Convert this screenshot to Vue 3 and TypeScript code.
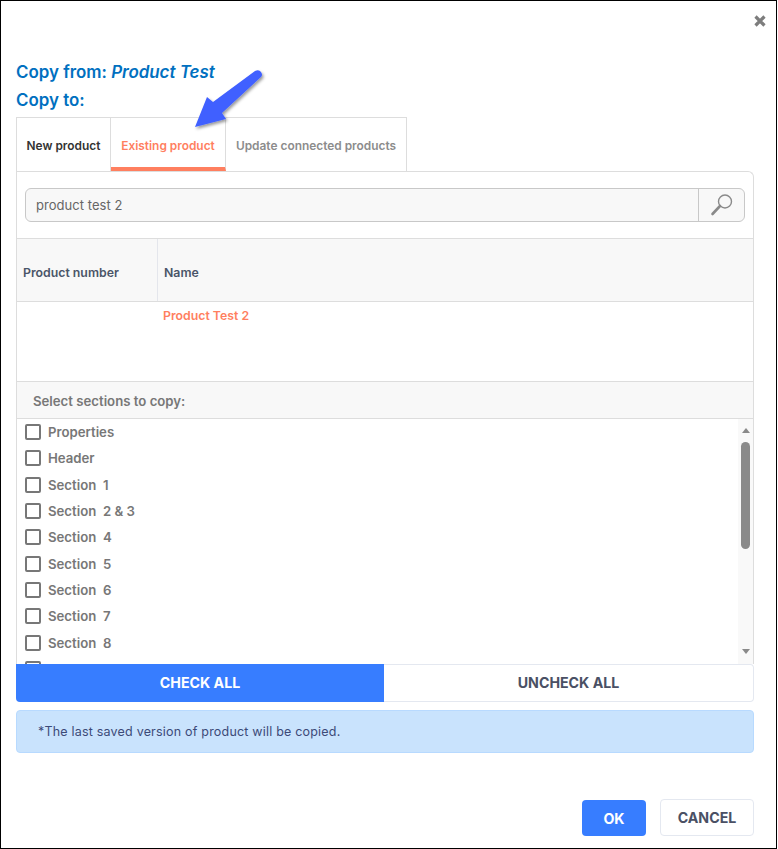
<script setup lang="ts">
const sections = [
  'Properties',
  'Header',
  'Section  1',
  'Section  2 & 3',
  'Section  4',
  'Section  5',
  'Section  6',
  'Section  7',
  'Section  8',
]
</script>

<template>
  <div class="dialog">
    <!-- close -->
    <div class="close-row">
      <svg class="close" width="14" height="14" viewBox="0 0 14 14">
        <path d="M2.5 2.5 L11.5 11.5 M11.5 2.5 L2.5 11.5" stroke="#7d7d7d" stroke-width="3.2" fill="none" />
      </svg>
    </div>

    <div class="title">Copy from: <em>Product Test</em></div>
    <div class="title title-to">Copy to:</div>

    <!-- tabs -->
    <div class="tabs">
      <div class="tab tab-new">New product</div>
      <div class="tab tab-active">Existing product</div>
      <div class="tab tab-muted">Update connected products</div>
    </div>

    <div class="panel">
      <div class="search-wrap">
        <div class="search">
          <div class="search-input">product test 2</div>
          <div class="search-btn">
            <svg width="24" height="24" viewBox="0 0 24 24" fill="none">
              <circle cx="15" cy="8.5" r="6.5" stroke="#8a8a8a" stroke-width="1.4" />
              <path d="M10 13 L2.5 21" stroke="#8a8a8a" stroke-width="2.6" stroke-linecap="round" />
            </svg>
          </div>
        </div>
      </div>

      <div class="thead">
        <div class="th th-num">Product number</div>
        <div class="th th-name">Name</div>
      </div>
      <div class="tbody">
        <div class="result">Product Test 2</div>
      </div>

      <div class="select-head">Select sections to copy:</div>
      <div class="list-wrap">
        <div class="list">
          <div v-for="s in sections" :key="s" class="item">
            <span class="check"></span>
            <span class="item-label">{{ s }}</span>
          </div>
          <!-- next row is scrolled out, only the box top peeks in -->
          <div class="item">
            <span class="check"></span>
          </div>
        </div>
        <div class="scrollbar">
          <span class="arrow-up"></span>
          <span class="thumb"></span>
          <span class="arrow-down"></span>
        </div>
      </div>
    </div>

    <div class="check-buttons">
      <div class="btn-check">CHECK ALL</div>
      <div class="btn-uncheck">UNCHECK ALL</div>
    </div>

    <div class="alert">*The last saved version of product will be copied.</div>

    <div class="footer">
      <div class="btn-ok">OK</div>
      <div class="btn-cancel">CANCEL</div>
    </div>

    <!-- annotation arrow laid over the screenshot -->
    <svg class="annotation" width="90" height="76" viewBox="0 0 90 76">
      <defs>
        <filter id="arrow-shadow" x="-20%" y="-20%" width="150%" height="150%">
          <feDropShadow dx="1.5" dy="2" stdDeviation="1.6" flood-color="#000" flood-opacity="0.4" />
        </filter>
      </defs>
      <path
        d="M76 3 Q80 1 82 4 Q84 7 82 9 L43 45 L47 51 L16 59 L28 29 L34 34 Z"
        fill="#4060ff"
        filter="url(#arrow-shadow)"
      />
    </svg>
  </div>
</template>

<style scoped>
.dialog {
  position: relative;
  box-sizing: border-box;
  width: 777px;
  height: 849px;
  padding: 0 22px 0 15px;
  background: #fff;
  border: 1px solid #000;
  font-family: Inter, "Liberation Sans", sans-serif;
  display: flex;
  flex-direction: column;
}
.close-row {
  height: 61px;
  display: flex;
  justify-content: flex-end;
  margin-right: -13px;
  padding-top: 13px;
  box-sizing: border-box;
}
.title {
  font-size: 16.9px;
  line-height: 20px;
  font-weight: 600;
  color: #0070c0;
}
.title em { font-style: italic; }
.title-to { margin-top: 8px; }

.tabs {
  display: flex;
  align-self: flex-start;
  height: 54px;
  margin-top: 7px;
  box-sizing: border-box;
  border-top: 1px solid #ddd;
  border-left: 1px solid #ddd;
}
.tab {
  box-sizing: border-box;
  height: 53px;
  padding-top: 1px;
  font-size: 11.9px;
  font-weight: 600;
  display: flex;
  align-items: center;
  justify-content: center;
  border-right: 1px solid #ddd;
}
.tab-new { width: 94px; color: #333; }
.tab-active {
  width: 115px;
  color: #ff7f5f;
  border-bottom: 4px solid #ff7f5f;
  padding-top: 5px;
}
.tab-muted { width: 181px; color: #8c8c8c; }

.panel {
  box-sizing: border-box;
  height: 493px;
  border: 1px solid #ddd;
  border-bottom: none;
  border-top-right-radius: 6px;
  display: flex;
  flex-direction: column;
}
.search-wrap {
  padding: 16px 8px;
  height: 66px;
  box-sizing: border-box;
}
.search {
  display: flex;
  height: 34px;
  box-sizing: border-box;
  border: 1px solid #c8c8c8;
  border-radius: 6px;
  background: #f8f8f8;
}
.search-input {
  flex: 1;
  padding-left: 10px;
  font-size: 13px;
  line-height: 32px;
  letter-spacing: 0.05px;
  color: #666;
}
.search-btn {
  width: 45px;
  border-left: 1px solid #c8c8c8;
  display: flex;
  align-items: center;
  justify-content: center;
}
.thead {
  display: flex;
  height: 64px;
  box-sizing: border-box;
  background: #f8f8f8;
  border-top: 1px solid #ddd;
  border-bottom: 1px solid #ddd;
}
.th {
  font-size: 12.3px;
  font-weight: 600;
  color: #4a5568;
  display: flex;
  align-items: center;
  padding-left: 6px;
  padding-top: 5px;
}
.th-num { width: 141px; box-sizing: border-box; border-right: 1px solid #e4e6ec; }
.tbody {
  height: 79px;
  box-sizing: border-box;
  padding: 6px 0 0 146px;
}
.result {
  font-size: 12.3px;
  line-height: 15px;
  font-weight: 600;
  color: #ff7f5f;
}
.select-head {
  height: 38px;
  box-sizing: border-box;
  padding-left: 16px;
  background: #f8f8f8;
  border-top: 1px solid #ddd;
  border-bottom: 1px solid #ddd;
  font-size: 13.2px;
  line-height: 38px;
  font-weight: 600;
  color: #777;
}
.list-wrap {
  flex: 1;
  min-height: 0;
  display: flex;
}
.list {
  flex: 1;
  overflow: hidden;
  padding: 0 0 0 8px;
}
.item {
  display: flex;
  align-items: center;
  height: 26.3px;
}
.check {
  box-sizing: border-box;
  width: 16px;
  height: 16px;
  border: 2px solid #777;
  border-radius: 2px;
  margin-right: 7px;
  flex: none;
}
.item-label {
  font-size: 13.2px;
  font-weight: 600;
  color: #777;
  white-space: pre;
}
.scrollbar {
  width: 15px;
  background: #f9f9f9;
  display: flex;
  flex-direction: column;
  align-items: center;
  padding-top: 9px;
  box-sizing: border-box;
}
.arrow-up, .arrow-down {
  width: 0;
  height: 0;
  border-left: 4.5px solid transparent;
  border-right: 4.5px solid transparent;
}
.arrow-up { border-bottom: 5px solid #8a8a8a; }
.arrow-down { border-top: 5px solid #8a8a8a; margin-top: 100px; }
.thumb {
  width: 9px;
  height: 107px;
  margin-top: 9px;
  border-radius: 5px;
  background: #8a8a8a;
}

.check-buttons {
  display: flex;
  height: 38px;
}
.btn-check {
  width: 368px;
  background: #377dff;
  color: #fff;
  font-size: 14.2px;
  font-weight: 700;
  text-align: center;
  line-height: 38px;
  border-radius: 0 0 0 4px;
}
.btn-uncheck {
  flex: 1;
  box-sizing: border-box;
  border: 1px solid #e4e8f0;
  border-left: none;
  border-radius: 0 4px 4px 0;
  background: #fff;
  color: #4a5064;
  font-size: 14.2px;
  font-weight: 700;
  text-align: center;
  line-height: 36px;
}
.alert {
  margin-top: 8px;
  height: 43px;
  box-sizing: border-box;
  padding-left: 21px;
  background: #c9e3fd;
  border: 1px solid #b8daff;
  border-radius: 4px;
  font-size: 12.5px;
  line-height: 41px;
  letter-spacing: 0.2px;
  color: #3c4a78;
}
.footer {
  display: flex;
  justify-content: flex-end;
  align-items: center;
  gap: 14px;
  margin-top: 46px;
}
.btn-ok {
  width: 64px;
  height: 36px;
  background: #377dff;
  color: #fff;
  border-radius: 4px;
  font-size: 14.2px;
  font-weight: 700;
  line-height: 37px;
  text-align: center;
}
.btn-cancel {
  width: 94px;
  height: 37px;
  box-sizing: border-box;
  border: 1px solid #e4e8f0;
  border-radius: 4px;
  color: #4a5064;
  font-size: 14.2px;
  font-weight: 700;
  line-height: 36px;
  text-align: center;
}
.annotation {
  position: absolute;
  left: 178px;
  top: 67px;
  pointer-events: none;
}
</style>
